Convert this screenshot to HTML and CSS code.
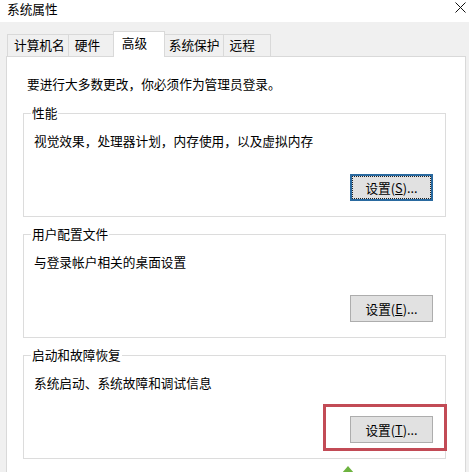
FILE: index.html
```html
<!DOCTYPE html>
<html lang="zh-CN">
<head>
<meta charset="UTF-8" />
<title>系统属性</title>
<meta name="viewport" content="width=device-width, initial-scale=1" />
<link rel="stylesheet" href="styles.css">
</head>
<body>
<header class="titlebar">
  <span class="title">系统属性</span>
  <span class="close" aria-label="关闭">
    <svg width="11" height="11" viewBox="0 0 11 11"><path d="M0.5 0.5 L10.5 10.5 M10.5 0.5 L0.5 10.5" stroke="#111" stroke-width="1" fill="none"/></svg>
  </span>
</header>

<nav class="tabs">
  <span class="tab">计算机名</span>
  <span class="tab">硬件</span>
  <span class="tab active">高级</span>
  <span class="tab">系统保护</span>
  <span class="tab">远程</span>
</nav>

<main class="panel">
  <p class="intro">要进行大多数更改，你必须作为管理员登录。</p>

  <fieldset class="group">
    <legend>性能</legend>
    <p class="desc">视觉效果，处理器计划，内存使用，以及虚拟内存</p>
    <div class="actions"><button class="btn focused">设置(<u>S</u>)...</button></div>
  </fieldset>

  <fieldset class="group">
    <legend>用户配置文件</legend>
    <p class="desc">与登录帐户相关的桌面设置</p>
    <div class="actions"><button class="btn">设置(<u>E</u>)...</button></div>
  </fieldset>

  <fieldset class="group">
    <legend>启动和故障恢复</legend>
    <p class="desc">系统启动、系统故障和调试信息</p>
    <div class="actions"><button class="btn marked">设置(<u>T</u>)...</button></div>
  </fieldset>
</main>

<span class="arrow"></span>
</body>
</html>
```

FILE: styles.css
```css
:root {
  --bar:#f0f0f0;
  --line:#d9d9d9;
  --group-line:#dcdcdc;
  --text:#000;
  --btn:#e1e1e1;
  --btn-border:#adadad;
  --focus:#2a6aa0;
  --mark:#c24b56;
  --ui:"Noto Sans CJK SC","Microsoft YaHei",sans-serif;
}

html, body { height:100%; overflow:hidden; }
body { margin:0; background:var(--bar); font:12.7px/16px var(--ui); color:var(--text); position:relative; }

/* title bar */
.titlebar { height:22px; background:#fff; display:flex; align-items:flex-start; justify-content:space-between; padding:0 3px 0 7px; box-sizing:border-box; }
.title { padding-top:1px; }
.close { display:block; width:11px; height:11px; margin-top:2px; }
.close svg { display:block; }

/* tabs */
.tabs { height:34px; display:flex; align-items:flex-end; padding-left:7px; }
.tab { height:22px; line-height:20px; min-width:48px; box-sizing:border-box; padding:0 3px 0 6px; border:1px solid var(--line); border-bottom:0; background:var(--bar); white-space:nowrap; }
.tab + .tab { margin-left:-1px; }
.tab.active { height:26px; line-height:21px; min-width:52px; padding-left:8px; margin:0 -2px -1px -3px; background:#fff; position:relative; z-index:1; }

/* page */
.panel { margin:0 3px 0 6px; background:#fff; border:1px solid var(--line); padding:19px 0 20px; }
.intro { margin:0 0 0 20px; }

.group { margin:13px 19px 0 16px; padding:0 12px 15px 7px; border:1px solid var(--group-line); min-width:0; }
.group + .group { margin-top:9px; }
.group legend { padding:0 1px; line-height:16px; }
.desc { margin:12px 0 0 3px; }

.actions { display:flex; justify-content:flex-end; margin-top:25px; }
.btn { width:83px; height:27px; box-sizing:border-box; padding:0; font:inherit; color:var(--text); background:var(--btn); border:1px solid var(--btn-border); border-radius:0; }
.btn.focused { border:2px solid var(--focus); outline:1px dotted #222; outline-offset:-3px; }
.btn.marked { position:relative; }
.btn.marked::after { content:""; position:absolute; left:-28px; right:-15px; top:-13px; bottom:-9px; border:3px solid var(--mark); pointer-events:none; }

/* annotation arrow, cut off by the bottom edge */
.arrow { position:absolute; left:342px; top:466px; width:0; height:0; border:6px solid transparent; border-top:0; border-bottom:7px solid #6db33f; }
```
